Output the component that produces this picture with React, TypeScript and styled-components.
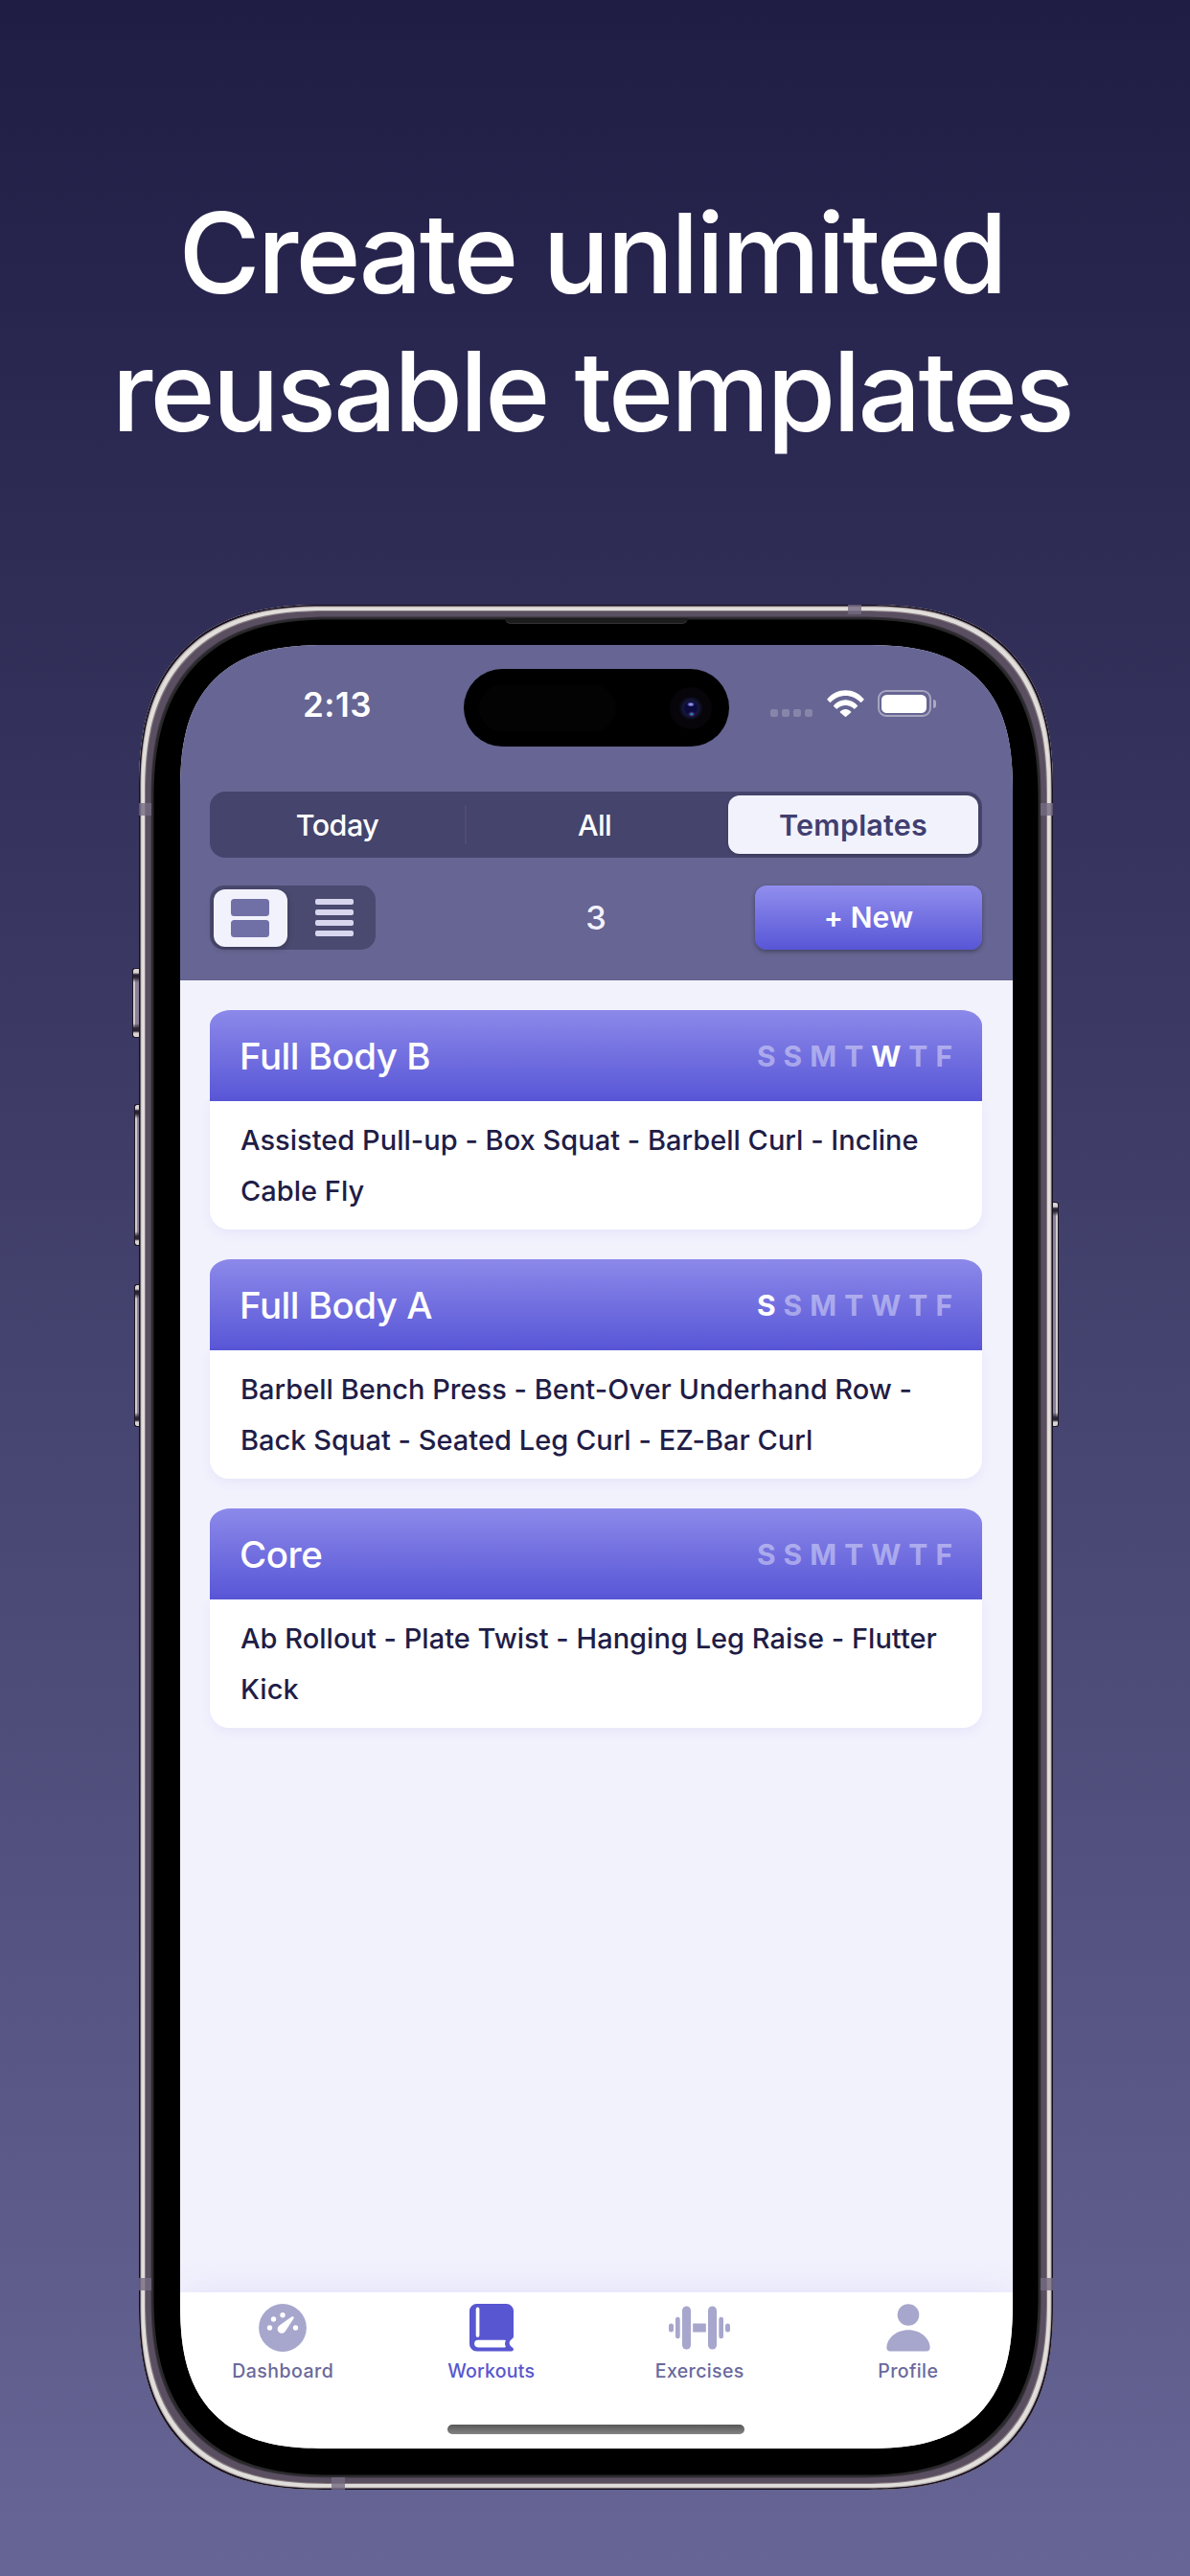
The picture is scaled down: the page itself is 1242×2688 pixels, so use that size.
import React from "react";
import styled, { createGlobalStyle } from "styled-components";

const GlobalStyle = createGlobalStyle`
  * { box-sizing: border-box; }
  body {
    margin: 0;
    font-family: Inter, "Liberation Sans", sans-serif;
    -webkit-font-smoothing: antialiased;
  }
`;

const color = {
  header: "#666593",
  accent: "#5856d0",
  surface: "#f2f2fd",
  ink: "#1f1d47",
  muted: "#a7a6cc",
  label: "#6a699c",
};

/* ---------- Stage ---------- */

const Stage = styled.main`
  width: 1242px;
  height: 2688px;
  display: flex;
  flex-direction: column;
  align-items: center;
  padding-top: 192px;
  overflow: hidden;
  background: linear-gradient(180deg, #1f1d44 0%, #666595 100%);
`;

const Headline = styled.h1`
  margin: 0 0 151px;
  padding-right: 6.5px;
  color: #fff;
  font-size: 116px;
  font-weight: 500;
  line-height: 144px;
  letter-spacing: -2.9px;
  text-align: center;
  white-space: nowrap;
`;

const HeadlineLine = styled.span`
  display: block;
`;

/* ---------- Phone hardware ---------- */

const Phone = styled.div`
  position: relative;
  width: 954px;
  height: 1967px;
  margin-left: 2px;
  flex: none;
`;

const Frame = styled.div`
  width: 100%;
  height: 100%;
  padding: 42px 42px 43px 43px;
  border-radius: 193px;
  corner-shape: superellipse(1.32);
  background: #000;
  box-shadow:
    inset 0 0 0 1.5px #150f20,
    inset 0 0 0 2.5px #b5a8a8,
    inset 0 0 0 6px #e0dedb,
    inset 0 0 0 7px #8a7c82,
    inset 0 0 0 12.5px #594f61,
    inset 0 0 0 13.5px #39333d,
    inset 0 0 0 15.5px #29282a;
`;

const Band = styled.span<{ $x: number; $y: number; $w: number; $h: number }>`
  position: absolute;
  left: ${(p) => p.$x}px;
  top: ${(p) => p.$y}px;
  width: ${(p) => p.$w}px;
  height: ${(p) => p.$h}px;
  background: rgba(116, 106, 130, 0.8);
`;

const SideButton = styled.span<{ $side: "left" | "right"; $y: number; $w: number; $h: number }>`
  position: absolute;
  ${(p) => p.$side}: ${(p) => -p.$w}px;
  top: ${(p) => p.$y}px;
  width: ${(p) => p.$w}px;
  height: ${(p) => p.$h}px;
  border: 1px solid #1d1628;
  border-${(p) => (p.$side === "left" ? "right" : "left")}: 0;
  border-radius: ${(p) => (p.$side === "left" ? "3px 0 0 3px" : "0 3px 3px 0")};
  background:
    linear-gradient(180deg, #d9d3d1 0 4px, #2b2434 6px 9px, transparent 14px calc(100% - 14px), #2b2434 calc(100% - 9px) calc(100% - 6px), #d9d3d1 calc(100% - 4px)),
    linear-gradient(${(p) => (p.$side === "left" ? "90deg" : "270deg")}, #d0caca 0 1.5px, #8b8299 2.5px);
`;

const Speaker = styled.span`
  position: absolute;
  left: 382px;
  top: 14px;
  width: 191px;
  height: 6px;
  background: #1c1c1c;
  border-bottom: 1px solid #333;
  border-radius: 0 0 6px 6px;
`;

/* ---------- Screen ---------- */

const Screen = styled.div`
  width: 869px;
  height: 1882px;
  display: flex;
  flex-direction: column;
  overflow: hidden;
  border-radius: 155px;
  corner-shape: superellipse(1.4);
  background: ${color.surface};
`;

const Header = styled.header`
  flex: none;
  height: 350px;
  padding: 25px 32px 0 31px;
  background: ${color.header};
`;

const StatusBar = styled.div`
  display: flex;
  align-items: center;
  height: 81px;
  margin: 0 -32px 47px -31px;
`;

const Clock = styled.div`
  flex: 0 0 296px;
  padding: 0 0 7px 128px;
  color: #fff;
  font-size: 35px;
  font-weight: 600;
  line-height: 40px;
  letter-spacing: 0.5px;
`;

const Island = styled.div`
  flex: 0 0 277px;
  height: 81px;
  display: flex;
  align-items: center;
  justify-content: space-between;
  padding: 0 18px 0 16px;
  border-radius: 41px;
  background: #000;
`;

const Sensor = styled.span`
  width: 143px;
  height: 48px;
  border-radius: 24px;
  background: #030303;
`;

const Camera = styled.span`
  width: 44px;
  height: 44px;
  border-radius: 50%;
  background:
    radial-gradient(ellipse 4px 2.5px at 50% 41%, #8f8ff0 0 35%, transparent 100%),
    radial-gradient(ellipse 4px 3px at 52% 64%, #2b7d8c 0 30%, #3a1065 70%, transparent 100%),
    radial-gradient(circle at 50% 50%, #0b0a3c 0 6px, #15173c 8px, #0b0c1c 11px, #07040a 12.5px);
`;

const StatusIcons = styled.div`
  display: flex;
  align-items: flex-end;
  height: 28px;
  margin: 0 0 9px 43px;
`;

const SignalDots = styled.div`
  display: flex;
  gap: 4.2px;
  margin-right: 15px;
`;

const SignalDot = styled.i`
  width: 7.8px;
  height: 8px;
  border-radius: 2.2px;
  background: rgba(255, 255, 255, 0.22);
`;

const WifiSvg = styled.svg`
  width: 39px;
  height: 28px;
  margin-right: 14px;
`;

const Battery = styled.div`
  display: flex;
  align-items: center;
`;

const BatteryBody = styled.div`
  width: 56px;
  height: 28px;
  padding: 2.5px;
  border: 2px solid rgba(255, 255, 255, 0.42);
  border-radius: 9px;
`;

const BatteryFill = styled.div`
  height: 100%;
  border-radius: 5.5px;
  background: #fff;
`;

const BatteryCap = styled.i`
  width: 3.5px;
  height: 9px;
  margin-left: 2px;
  border-radius: 0 5px 5px 0;
  background: rgba(255, 255, 255, 0.45);
`;

/* ---------- Header controls ---------- */

const Segments = styled.nav`
  display: flex;
  align-items: center;
  height: 69px;
  padding: 4px 4px 4px 0;
  border-radius: 16px;
  background: #45446c;
`;

const Segment = styled.span<{ $width: number; $active?: boolean; $spacing: number }>`
  flex: 0 0 ${(p) => p.$width}px;
  height: 61px;
  margin-left: ${(p) => (p.$active ? 6 : 0)}px;
  border-radius: 12px;
  background: ${(p) => (p.$active ? color.surface : "transparent")};
  box-shadow: ${(p) => (p.$active ? "0 1px 3px rgba(0, 0, 0, 0.2)" : "none")};
  color: ${(p) => (p.$active ? "#413f70" : "#fff")};
  font-size: 30.5px;
  font-weight: ${(p) => (p.$active ? 600 : 500)};
  line-height: 61px;
  letter-spacing: ${(p) => p.$spacing}px;
  text-align: center;
`;

const SegmentDivider = styled.i`
  width: 2px;
  height: 41px;
  background: #4f4c75;
`;

const ControlRow = styled.div`
  display: grid;
  grid-template-columns: 1fr auto 1fr;
  align-items: center;
  height: 67px;
  margin-top: 29px;
`;

const ViewToggle = styled.div`
  display: flex;
  align-items: center;
  width: 173px;
  height: 67px;
  padding: 0 0 0 3.5px;
  border-radius: 15px;
  background: #4a496f;
`;

const ToggleOption = styled.span<{ $active?: boolean }>`
  display: flex;
  flex-direction: column;
  align-items: center;
  justify-content: center;
  gap: ${(p) => (p.$active ? 4 : 5)}px;
  flex: ${(p) => (p.$active ? "0 0 77px" : "1")};
  height: 60px;
  margin-left: ${(p) => (p.$active ? 0 : 6)}px;
  border-radius: 12px;
  background: ${(p) => (p.$active ? color.surface : "transparent")};
  box-shadow: ${(p) => (p.$active ? "0 2px 6px rgba(0, 0, 0, 0.22)" : "none")};
`;

const CardGlyph = styled.i`
  width: 40px;
  height: 18px;
  border-radius: 3.5px;
  background: #7170a6;
`;

const LineGlyph = styled.i`
  width: 40px;
  height: 6.2px;
  border-radius: 2px;
  background: #d7d6ee;
`;

const Count = styled.span`
  color: ${color.surface};
  font-size: 34.5px;
  font-weight: 500;
  line-height: 67px;
`;

const NewButton = styled.button`
  justify-self: end;
  width: 237px;
  height: 67px;
  padding: 0;
  border: 0;
  border-radius: 12px;
  background: linear-gradient(180deg, #918eee, #5856d6);
  box-shadow: 0 2px 4px rgba(0, 0, 0, 0.35);
  color: #fff;
  font: 600 30px/67px Inter, "Liberation Sans", sans-serif;
  letter-spacing: 0.1px;
`;

/* ---------- Template cards ---------- */

const List = styled.section`
  flex: 1;
  display: flex;
  flex-direction: column;
  gap: 31px;
  padding: 31px 32px 0 31px;
`;

const Card = styled.article`
  flex: none;
`;

const CardHeader = styled.div`
  display: flex;
  align-items: center;
  justify-content: space-between;
  height: 95px;
  padding: 0 31px;
  border-radius: 22px 22px 0 0 / 16px 16px 0 0;
  background: linear-gradient(180deg, #8c89ea, #5856d6);
`;

const CardTitle = styled.h2`
  margin: 0;
  color: #fff;
  font-size: 38.5px;
  font-weight: 450;
  line-height: 48px;
  letter-spacing: -0.5px;
`;

const Days = styled.div`
  display: flex;
  gap: 8px;
`;

const Day = styled.span<{ $on: boolean }>`
  color: ${(p) => (p.$on ? "#fff" : "rgba(255, 255, 255, 0.42)")};
  font-size: 30px;
  font-weight: 700;
  line-height: 40px;
`;

const CardBody = styled.p`
  height: 134px;
  margin: 0;
  padding: 15px 0 0 32px;
  border-radius: 0 0 20px 20px;
  background: #fff;
  box-shadow: 0 4px 12px rgba(88, 86, 214, 0.08);
  color: ${color.ink};
  font-size: 29px;
  font-weight: 500;
  line-height: 52.7px;
  letter-spacing: 0.02px;
  white-space: pre-line;
`;

/* ---------- Tab bar ---------- */

const TabBar = styled.footer`
  flex: none;
  display: flex;
  flex-direction: column;
  align-items: center;
  height: 163px;
  padding: 12px 2px 15px 0;
  background: #fff;
  box-shadow: 0 -3px 36px rgba(88, 86, 214, 0.1);
`;

const Tabs = styled.div`
  display: grid;
  grid-template-columns: repeat(4, 217.5px);
`;

const Tab = styled.div<{ $active?: boolean; $spacing: number }>`
  display: flex;
  flex-direction: column;
  align-items: center;
  gap: 8px;
  color: ${(p) => (p.$active ? color.accent : color.label)};
  font-size: 19.5px;
  font-weight: 500;
  line-height: 24px;
  letter-spacing: ${(p) => p.$spacing}px;

  svg {
    height: 50px;
    fill: ${(p) => (p.$active ? color.accent : color.muted)};
  }
`;

const HomeIndicator = styled.i`
  width: 310px;
  height: 10px;
  margin-top: auto;
  border-radius: 5px;
  background: linear-gradient(180deg, #585858, #838383);
`;

/* ---------- Icons ---------- */

const WifiIcon = () => (
  <WifiSvg viewBox="0 0 39 28" fill="#fff">
    <path d="M.5 9.2C5.600 3.500 12.300 .3 19.500 .3S33.400 3.500 38.500 9.200q.5.600 0 1.100l-2.400 2.400q-.6.500-1.100 0C30.800 8.300 25.400 5.900 19.500 5.900S8.200 8.300 4 12.700q-.5.500-1.100 0L.5 10.300q-.5-.5 0-1.100z" />
    <path d="M7.200 16.100C10.500 12.400 14.800 10.300 19.500 10.300s9 2.100 12.300 5.800q.5.600 0 1.100l-2.500 2.400q-.6.500-1.100 0C25.800 17.200 22.800 15.900 19.500 15.900s-6.300 1.300-8.700 3.700q-.5.500-1.100 0L7.200 17.200q-.5-.5 0-1.100z" />
    <path d="M13.900 22.500C15.400 21 17.400 20.100 19.500 20.100s4.100.9 5.600 2.400q.5.600 0 1.100L20.100 27.700q-.6.500-1.200 0L13.900 23.600q-.5-.5 0-1.100z" />
  </WifiSvg>
);

const GaugeIcon = () => (
  <svg width="50" viewBox="0 0 50 50">
    <circle cx="25" cy="25" r="24.900" />
    <g fill="#fff">
      <circle cx="11.500" cy="25" r="2.700" />
      <circle cx="15.500" cy="16" r="2.700" />
      <circle cx="25" cy="11.700" r="2.700" />
      <circle cx="38.500" cy="25" r="2.700" />
      <path d="M21.700 22.600 34.400 13.600C36 12.500 37.500 13.900 36.400 15.600L27.900 28.400A4.400 4.400 0 1 1 21.700 22.600z" />
    </g>
  </svg>
);

const BookIcon = () => (
  <svg width="46" viewBox="0 0 46 50">
    <path d="M7.500 0H38.500A7.500 7.500 0 0 1 46 7.500V34Q46 35.500 44.800 36.300C40.600 39.300 40.600 42.500 44.800 45.400Q46 46.300 46 47.200 46 49.500 43.700 49.500H7.500A7.500 7.500 0 0 1 0 42V7.500A7.500 7.500 0 0 1 7.500 0z" />
    <rect x="6.700" y="3.600" width="3.700" height="31.200" rx="1.850" fill="#fff" />
    <path d="M8.900 37.800H36.700Q38.200 37.800 37.600 39.200 36.300 41.600 37.600 44 38.200 45.400 36.700 45.400H8.900A3.800 3.800 0 0 1 8.900 37.800z" fill="#fff" />
  </svg>
);

const DumbbellIcon = () => (
  <svg width="64" viewBox="0 -2.500 64 50">
    <rect x="0" y="18" width="5" height="9" rx="2.500" />
    <rect x="7" y="11.300" width="4.700" height="22.500" rx="2.300" />
    <rect x="14" y="0" width="9" height="45" rx="4.500" />
    <rect x="25.200" y="18" width="13.600" height="9" />
    <rect x="41" y="0" width="9" height="45" rx="4.500" />
    <rect x="52.300" y="11.300" width="4.700" height="22.500" rx="2.300" />
    <rect x="59" y="18" width="5" height="9" rx="2.500" />
  </svg>
);

const PersonIcon = () => (
  <svg width="46" viewBox="0 0 46 50">
    <circle cx="23" cy="11.500" r="11.300" />
    <path d="M23 27.200C35.600 27.200 45.600 36 45.600 45.800Q45.600 49.500 42 49.500H4Q.4 49.500 .4 45.800C.4 36 10.400 27.200 23 27.200z" />
  </svg>
);

/* ---------- Data ---------- */

const DAY_LETTERS = ["S", "S", "M", "T", "W", "T", "F"];

const templates = [
  {
    name: "Full Body B",
    day: 4,
    exercises: "Assisted Pull-up - Box Squat - Barbell Curl - Incline\nCable Fly",
  },
  {
    name: "Full Body A",
    day: 0,
    exercises: "Barbell Bench Press - Bent-Over Underhand Row -\nBack Squat - Seated Leg Curl - EZ-Bar Curl",
  },
  {
    name: "Core",
    day: -1,
    exercises: "Ab Rollout - Plate Twist - Hanging Leg Raise - Flutter\nKick",
  },
];

export default function App() {
  return (
    <>
      <GlobalStyle />
      <Stage>
        <Headline>
          <HeadlineLine>Create unlimited</HeadlineLine>
          <HeadlineLine>reusable templates</HeadlineLine>
        </Headline>

        <Phone>
          <SideButton $side="left" $y={379} $w={7} $h={73} />
          <SideButton $side="left" $y={521} $w={5} $h={148} />
          <SideButton $side="left" $y={709} $w={5} $h={149} />
          <SideButton $side="right" $y={623} $w={6} $h={235} />
          <Frame>
            <Screen>
              <Header>
                <StatusBar>
                  <Clock>2:13</Clock>
                  <Island>
                    <Sensor />
                    <Camera />
                  </Island>
                  <StatusIcons>
                    <SignalDots>
                      <SignalDot />
                      <SignalDot />
                      <SignalDot />
                      <SignalDot />
                    </SignalDots>
                    <WifiIcon />
                    <Battery>
                      <BatteryBody>
                        <BatteryFill />
                      </BatteryBody>
                      <BatteryCap />
                    </Battery>
                  </StatusIcons>
                </StatusBar>

                <Segments>
                  <Segment $width={266} $spacing={-0.55}>Today</Segment>
                  <SegmentDivider />
                  <Segment $width={267} $spacing={-0.6}>All</Segment>
                  <Segment $width={261} $spacing={0.2} $active>Templates</Segment>
                </Segments>

                <ControlRow>
                  <ViewToggle>
                    <ToggleOption $active>
                      <CardGlyph />
                      <CardGlyph />
                    </ToggleOption>
                    <ToggleOption>
                      <LineGlyph />
                      <LineGlyph />
                      <LineGlyph />
                      <LineGlyph />
                    </ToggleOption>
                  </ViewToggle>
                  <Count>3</Count>
                  <NewButton>+ New</NewButton>
                </ControlRow>
              </Header>

              <List>
                {templates.map((t) => (
                  <Card key={t.name}>
                    <CardHeader>
                      <CardTitle>{t.name}</CardTitle>
                      <Days>
                        {DAY_LETTERS.map((d, i) => (
                          <Day key={i} $on={i === t.day}>
                            {d}
                          </Day>
                        ))}
                      </Days>
                    </CardHeader>
                    <CardBody>{t.exercises}</CardBody>
                  </Card>
                ))}
              </List>

              <TabBar>
                <Tabs>
                  <Tab $spacing={0.5}>
                    <GaugeIcon />
                    Dashboard
                  </Tab>
                  <Tab $spacing={0.25} $active>
                    <BookIcon />
                    Workouts
                  </Tab>
                  <Tab $spacing={0.4}>
                    <DumbbellIcon />
                    Exercises
                  </Tab>
                  <Tab $spacing={0.4}>
                    <PersonIcon />
                    Profile
                  </Tab>
                </Tabs>
                <HomeIndicator />
              </TabBar>
            </Screen>
          </Frame>
          <Speaker />
          <Band $x={0} $y={207} $w={13} $h={13} />
          <Band $x={941} $y={207} $w={13} $h={13} />
          <Band $x={740} $y={0} $w={14} $h={10} />
          <Band $x={201} $y={1954} $w={14} $h={13} />
          <Band $x={941} $y={1746} $w={13} $h={13} />
          <Band $x={0} $y={1746} $w={13} $h={13} />
        </Phone>
      </Stage>
    </>
  );
}
